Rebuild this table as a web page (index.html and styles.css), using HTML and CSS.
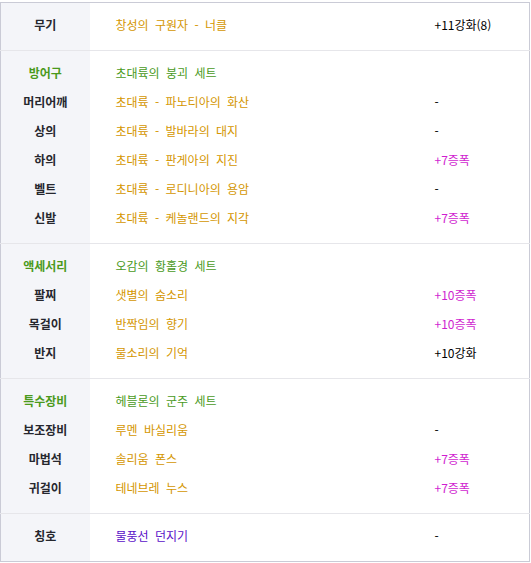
FILE: index.html
```html
<!DOCTYPE html>
<html lang="ko">
<head>
<meta charset="utf-8">
<link rel="stylesheet" href="styles.css">
</head>
<body>
<table class="equip">
  <colgroup>
    <col class="c-label">
    <col class="c-name">
    <col class="c-opt">
  </colgroup>
  <tbody>
    <tr><th>무기</th><td class="unique">창성의 구원자 - 너클</td><td class="plain">+11강화(8)</td></tr>
  </tbody>
  <tbody>
    <tr><th class="set">방어구</th><td class="set">초대륙의 붕괴 세트</td><td></td></tr>
    <tr><th>머리어깨</th><td class="unique">초대륙 - 파노티아의 화산</td><td class="plain">-</td></tr>
    <tr><th>상의</th><td class="unique">초대륙 - 발바라의 대지</td><td class="plain">-</td></tr>
    <tr><th>하의</th><td class="unique">초대륙 - 판게아의 지진</td><td class="amp">+7증폭</td></tr>
    <tr><th>벨트</th><td class="unique">초대륙 - 로디니아의 용암</td><td class="plain">-</td></tr>
    <tr><th>신발</th><td class="unique">초대륙 - 케놀랜드의 지각</td><td class="amp">+7증폭</td></tr>
  </tbody>
  <tbody>
    <tr><th class="set">액세서리</th><td class="set">오감의 황홀경 세트</td><td></td></tr>
    <tr><th>팔찌</th><td class="unique">샛별의 숨소리</td><td class="amp">+10증폭</td></tr>
    <tr><th>목걸이</th><td class="unique">반짝임의 향기</td><td class="amp">+10증폭</td></tr>
    <tr><th>반지</th><td class="unique">물소리의 기억</td><td class="plain">+10강화</td></tr>
  </tbody>
  <tbody>
    <tr><th class="set">특수장비</th><td class="set">헤블론의 군주 세트</td><td></td></tr>
    <tr><th>보조장비</th><td class="unique">루멘 바실리움</td><td class="plain">-</td></tr>
    <tr><th>마법석</th><td class="unique">솔리움 폰스</td><td class="amp">+7증폭</td></tr>
    <tr><th>귀걸이</th><td class="unique">테네브레 누스</td><td class="amp">+7증폭</td></tr>
  </tbody>
  <tbody>
    <tr><th>칭호</th><td class="rare">물풍선 던지기</td><td class="plain">-</td></tr>
  </tbody>
</table>
</body>
</html>
```

FILE: styles.css
```css
html, body {
  margin: 0;
  padding: 0;
  background: #fff;
}

body {
  padding-top: 2px;
  font-family: "Noto Sans CJK KR", "Noto Sans", sans-serif;
  font-size: 12px;
}

.equip {
  width: 530px;
  border-collapse: collapse;
  border: 1px solid #cacbd6;
  table-layout: fixed;
}

.c-label { width: 89px; }
.c-name { width: 345px; }
.c-opt { width: auto; }

.equip tbody + tbody {
  border-top: 1px solid #e6e6ea;
}

.equip th,
.equip td {
  height: 29px;
  padding: 0;
  line-height: 29px;
  white-space: nowrap;
  vertical-align: middle;
}

.equip tr:first-child th,
.equip tr:first-child td {
  padding-top: 7px;
}

.equip tr:last-child th,
.equip tr:last-child td {
  padding-bottom: 11px;
}

.equip th {
  background: #f4f5f9;
  color: #26272e;
  font-weight: 700;
  text-align: center;
}

.equip td {
  text-align: left;
  word-spacing: 3px;
}

.equip td.unique,
.equip td.set,
.equip td.rare {
  padding-left: 26px;
}

.equip th.set { color: #4a9a1c; }
.equip td.set { color: #4a9a1c; }
.unique { color: #d49600; }
.rare { color: #5a0fc8; }
.amp { color: #d01ed0; }
.plain { color: #000; }
```
